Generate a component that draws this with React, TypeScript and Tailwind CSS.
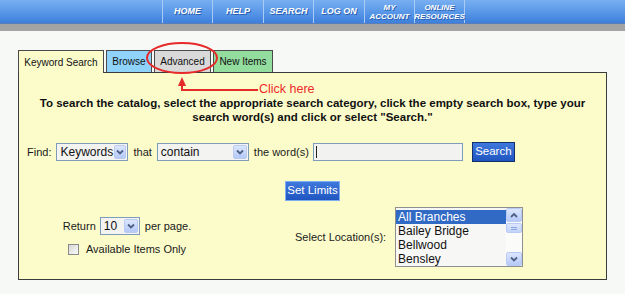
import React from "react";

const navItems = [
  { w: "w-[50px]", lines: ["HOME"] },
  { w: "w-[51px]", lines: ["HELP"] },
  { w: "w-[50px]", lines: ["SEARCH"] },
  { w: "w-[51px]", lines: ["LOG ON"] },
  { w: "w-[50px]", lines: ["MY", "ACCOUNT"] },
  { w: "w-[51px]", lines: ["ONLINE", "RESOURCES"] },
];

function Chevron({ up = false }: { up?: boolean }) {
  return (
    <svg width="8" height="6" viewBox="0 0 8 6">
      <path
        d={up ? "M1 5 L4 2 L7 5" : "M1 1.5 L4 4.5 L7 1.5"}
        fill="none"
        stroke="#4d6185"
        strokeWidth="1.8"
      />
    </svg>
  );
}

function DropButton() {
  return (
    <div className="m-[1px] flex w-[14px] items-center justify-center self-stretch rounded-[2px] border border-[#b9cbf3] bg-linear-to-b from-[#dce6fd] to-[#b5c9f8]">
      <Chevron />
    </div>
  );
}

function Select({ className, text }: { className: string; text: string }) {
  return (
    <div className={`flex h-[18px] items-stretch border border-[#7f9db9] bg-[#f3f3f1] ${className}`}>
      <span className="flex flex-1 items-center pl-[3px] text-[12px] text-[#111]">{text}</span>
      <DropButton />
    </div>
  );
}

function BlueButton({ label, className }: { label: string; className: string }) {
  return (
    <div
      className={`flex h-[20px] items-center justify-center bg-linear-to-b from-[#3f78dc] to-[#2055c0] text-[11.5px] text-white ${className}`}
    >
      {label}
    </div>
  );
}

export default function App() {
  return (
    <div className="relative h-[294px] w-[625px] overflow-hidden bg-[#f7f9f6] font-['Liberation_Sans',Arial,sans-serif] text-[#1a1a1a]">
      {/* top nav */}
      <div className="flex h-[23px] bg-linear-to-b from-[#78aff0] via-[#5a98e8] to-[#3d7fdb]">
        <div className="w-[162px]" />
        {navItems.map((item, i) => (
          <div
            key={i}
            className={`flex ${item.w} flex-col items-center justify-center border-l border-[#a9ccf6] text-center font-bold italic leading-[9px] text-white [text-shadow:1px_1px_0_#2d5fae] ${
              i === navItems.length - 1 ? "border-r" : ""
            } ${item.lines.length > 1 ? "text-[8px]" : "text-[9px]"}`}
          >
            {item.lines.map((l) => (
              <span key={l}>{l}</span>
            ))}
          </div>
        ))}
      </div>
      <div className="h-[8px] border-t border-[#5a7fb8] bg-[#a3a3a3]" />

      {/* search box */}
      <div className="ml-[18px] mt-[18px] w-[589px]">
        <div className="flex h-[23px] items-end gap-[2px] text-[10px] text-[#111]">
          <div className="relative z-10 -mb-[1px] flex h-[23px] w-[86px] items-center justify-center border border-b-0 border-[#4a4a4a] bg-[#fcfccb]">
            Keyword Search
          </div>
          <div className="flex h-[22px] w-[46px] items-center justify-center border border-b-0 border-[#4a4a4a] bg-[#8fd3fb]">
            Browse
          </div>
          <div className="flex h-[22px] w-[57px] items-center justify-center border border-b-0 border-[#4a4a4a] bg-[#d9d9d9]">
            Advanced
          </div>
          <div className="flex h-[22px] w-[60px] items-center justify-center border border-b-0 border-[#4a4a4a] bg-[#93dd9f]">
            New Items
          </div>
        </div>

        <div className="flex h-[208px] flex-col border border-[#3c3c3c] bg-[#fcfccb]">
          <p className="pt-[23px] text-center text-[11.5px] font-bold leading-[14px] text-[#111]">
            To search the catalog, select the appropriate search category, click the empty search box, type your
            <br />
            search word(s) and click or select "Search."
          </p>

          <div className="mt-[18px] flex h-[20px] items-center pl-[8px] text-[11px]">
            <span>Find:</span>
            <Select className="ml-[5px] w-[72px]" text="Keywords" />
            <span className="ml-[5px]">that</span>
            <Select className="ml-[5px] w-[92px]" text="contain" />
            <span className="ml-[5px]">the word(s)</span>
            <div className="ml-[4px] flex h-[18px] w-[150px] items-center border border-[#7f9db9] bg-[#f2f2f0] pl-[2px]">
              <div className="h-[12px] w-px bg-[#222]" />
            </div>
            <BlueButton label="Search" className="ml-[9px] w-[43px] border border-[#12306e]" />
          </div>

          <div className="mt-[19px] flex justify-center">
            <BlueButton label="Set Limits" className="h-[19px] w-[55px] border border-[#7eaef0]" />
          </div>

          <div className="mt-[6px] flex items-center">
            <div className="flex w-[216px] flex-col items-center text-[11px]">
              <div className="flex items-center">
                <span>Return</span>
                <Select className="ml-[4px] w-[40px]" text="10" />
                <span className="ml-[5px]">per page.</span>
              </div>
              <div className="mt-[6px] flex items-center">
                <div className="h-[11px] w-[11px] border border-[#8a8a8a] bg-linear-to-br from-[#d8d8d8] to-[#fafafa]" />
                <span className="ml-[7px]">Available Items Only</span>
              </div>
            </div>
            <span className="ml-[60px] text-[11px]">Select Location(s):</span>
            <div className="ml-[9px] flex h-[60px] w-[128px] border border-[#8f8f8f] bg-[#f7f7f5]">
              <div className="flex-1 pt-[2px] text-[12px] leading-[14px] text-[#111]">
                <div className="bg-[#316ac5] pl-[2px] text-white">All Branches</div>
                <div className="pl-[2px]">Bailey Bridge</div>
                <div className="pl-[2px]">Bellwood</div>
                <div className="pl-[2px]">Bensley</div>
              </div>
              <div className="flex w-[16px] flex-col bg-[#fbfbf9]">
                <div className="flex h-[14px] items-center justify-center rounded-[2px] border border-[#b9cbf3] bg-linear-to-b from-[#dce6fd] to-[#b5c9f8]">
                  <Chevron up />
                </div>
                <div className="mt-[1px] flex h-[10px] items-center justify-center rounded-[2px] border border-[#b9cbf3] bg-linear-to-b from-[#dce6fd] to-[#c3d4fa]">
                  <div className="h-[3px] w-[6px] border-y border-[#8aa5e0]" />
                </div>
                <div className="flex-1" />
                <div className="flex h-[14px] items-center justify-center rounded-[2px] border border-[#b9cbf3] bg-linear-to-b from-[#dce6fd] to-[#b5c9f8]">
                  <Chevron />
                </div>
              </div>
            </div>
          </div>
        </div>
      </div>

      {/* annotation overlay */}
      <svg className="pointer-events-none absolute left-0 top-0" width="625" height="294">
        <ellipse cx="182" cy="58" rx="35" ry="15" fill="none" stroke="#e62a2a" strokeWidth="2" />
        <path d="M182 86 L182 90 L258 90" fill="none" stroke="#e62a2a" strokeWidth="2" />
        <path d="M182 77 L178 86 L186 86 Z" fill="#e62a2a" />
      </svg>
      <span className="absolute left-[259px] top-[81px] text-[12.5px] leading-[16px] text-[#ee2a2a]">Click here</span>
    </div>
  );
}
